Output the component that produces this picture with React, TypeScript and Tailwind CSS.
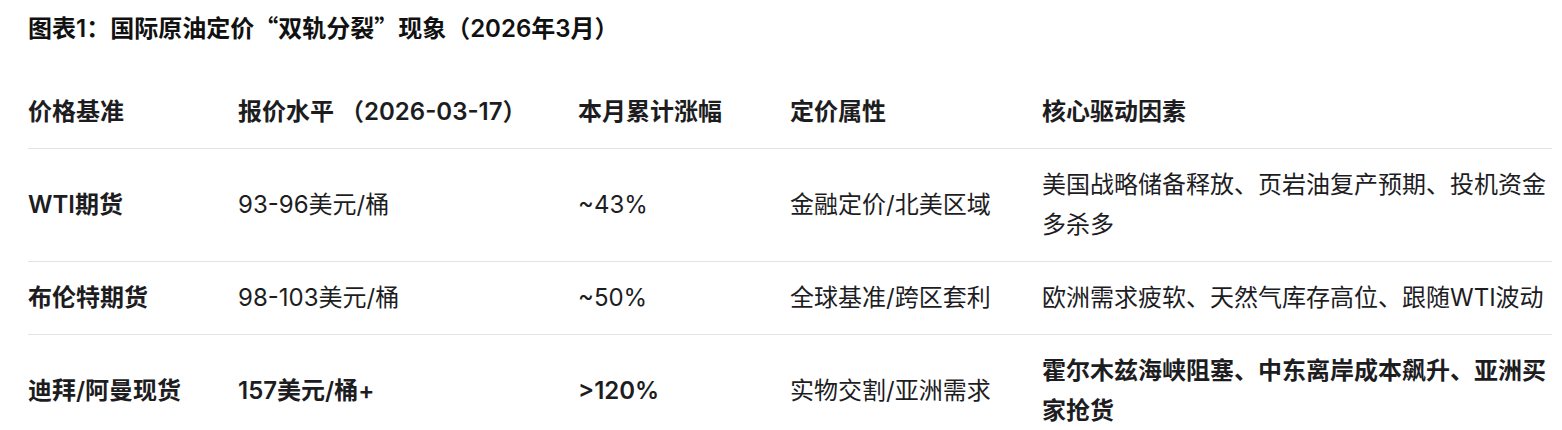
import React from 'react';

interface PriceRow {
  name: string;
  price: string;
  change: string;
  attr: string;
  drivers: string;
  strong?: boolean; // 迪拜/阿曼 那一行加粗
}

const rows: PriceRow[] = [
  {
    name: 'WTI期货',
    price: '93-96美元/桶',
    change: '~43%',
    attr: '金融定价/北美区域',
    drivers: '美国战略储备释放、页岩油复产预期、投机资金多杀多',
  },
  {
    name: '布伦特期货',
    price: '98-103美元/桶',
    change: '~50%',
    attr: '全球基准/跨区套利',
    drivers: '欧洲需求疲软、天然气库存高位、跟随WTI波动',
  },
  {
    name: '迪拜/阿曼现货',
    price: '157美元/桶+',
    change: '>120%',
    attr: '实物交割/亚洲需求',
    drivers: '霍尔木兹海峡阻塞、中东离岸成本飙升、亚洲买家抢货',
    strong: true,
  },
];

const headers = ['价格基准', '报价水平 （2026-03-17）', '本月累计涨幅', '定价属性', '核心驱动因素'];

const App: React.FC = () => {
  return (
    <div className="min-h-screen bg-white px-[28px] pt-[7px] text-[#1d1d1f] font-['Inter','Noto_Sans_CJK_SC',sans-serif] text-[24px] leading-[40px]">
      <h1 className="h-10 overflow-hidden font-semibold text-[#111]">
        图表1：国际原油定价
        <span className="font-['Noto_Sans_CJK_SC',sans-serif]">“</span>
        双轨分裂
        <span className="font-['Noto_Sans_CJK_SC',sans-serif]">”</span>
        现象（2026年3月）
      </h1>

      <table className="mt-[29px] w-[1524px] table-fixed border-collapse">
        <colgroup>
          <col className="w-[210px]" />
          <col className="w-[340px]" />
          <col className="w-[212px]" />
          <col className="w-[252px]" />
          <col />
        </colgroup>
        <thead>
          <tr className="border-b border-[#e3e3e3]">
            {headers.map(h => (
              <th key={h} className="py-4 px-0 text-left font-semibold align-middle whitespace-pre">
                {h}
              </th>
            ))}
          </tr>
        </thead>
        <tbody>
          {rows.map(row => (
            <tr key={row.name} className="border-b border-[#e3e3e3]">
              <td className="py-4 font-semibold align-middle">{row.name}</td>
              <td className={`py-4 align-middle ${row.strong ? 'font-semibold' : ''}`}>{row.price}</td>
              <td className={`py-4 align-middle ${row.strong ? 'font-semibold' : ''}`}>{row.change}</td>
              <td className="py-4 align-middle">{row.attr}</td>
              <td className={`py-4 align-middle ${row.strong ? 'font-semibold' : ''}`}>{row.drivers}</td>
            </tr>
          ))}
        </tbody>
      </table>
    </div>
  );
};

export default App;
